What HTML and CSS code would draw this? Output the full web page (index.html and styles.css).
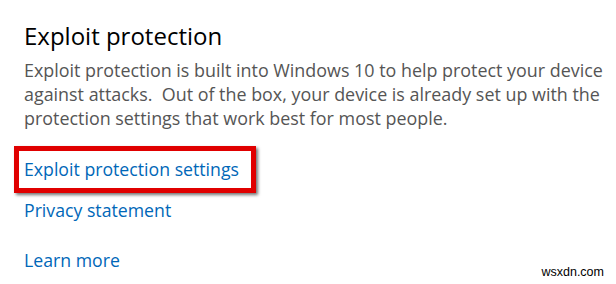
FILE: index.html
```html
<!DOCTYPE html>
<html>
<head>
<meta charset="utf-8">
<link rel="stylesheet" href="styles.css">
</head>
<body>
<div class="page">
  <h1 class="title">Exploit protection</h1>
  <p class="desc">Exploit protection is built into Windows 10 to help protect your device against attacks.&nbsp; Out of the box, your device is already set up with the protection settings that work best for most people.</p>
  <div class="links">
    <div class="highlight"><a class="link" href="#">Exploit protection settings</a></div>
    <a class="link privacy" href="#">Privacy statement</a>
    <a class="link learn" href="#">Learn more</a>
  </div>
  <div class="watermark">wsxdn.com</div>
</div>
</body>
</html>
```
FILE: styles.css
```css
html, body {
  margin: 0;
  padding: 0;
  background: #fff;
}
.page {
  position: relative;
  width: 616px;
  height: 284px;
  padding: 20px 0 0 24px;
  box-sizing: border-box;
  font-family: "Open Sans", "Noto Sans", sans-serif;
  overflow: hidden;
}
.title {
  margin: 0;
  font-size: 24px;
  font-weight: 400;
  line-height: 32px;
  color: #000;
}
.desc {
  margin: 6px 0 0 0;
  width: 592px;
  font-size: 17.9px;
  line-height: 24px;
  color: #555;
}
.links {
  display: flex;
  flex-direction: column;
  align-items: flex-start;
  margin-top: 16px;
}
.highlight {
  margin-left: -10px;
  padding: 6px 12px 7px 5px;
  border: 5px solid #e00000;
  box-shadow: 2px 2px 3px rgba(0,0,0,0.55);
}
.link {
  font-size: 17.7px;
  line-height: 24px;
  color: #0067b8;
  text-decoration: none;
}
.privacy {
  margin-top: 5px;
}
.learn {
  margin-top: 26px;
}
.watermark {
  position: absolute;
  right: 12px;
  bottom: 5px;
  font-family: "Liberation Sans", Arial, sans-serif;
  font-size: 12.5px;
  color: #000;
}
```
